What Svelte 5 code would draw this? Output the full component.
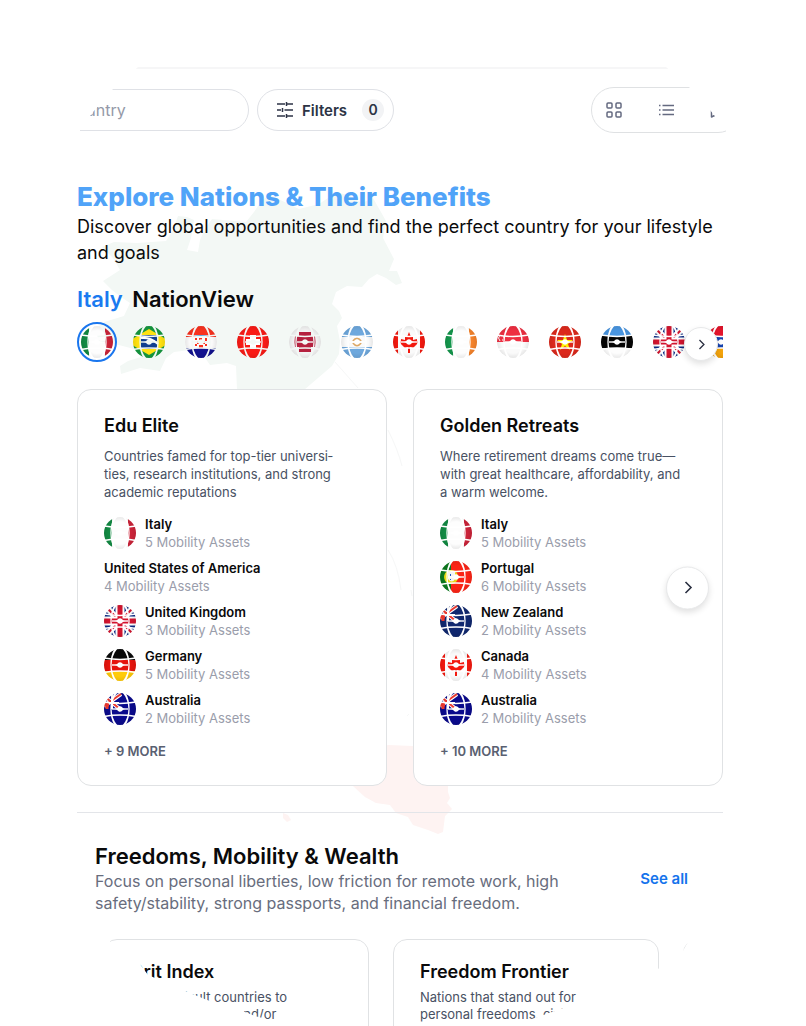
<script>
	let query = "";
	let selected = "Italy";
	let view = "grid";

	const jack = [
		{ d: "M0 0H32V32H0Z", fill: "#0b2a83" },
		{ d: "M0 0L32 32M32 0L0 32", stroke: "#fff", width: 6 },
		{ d: "M0 0L32 32M32 0L0 32", stroke: "#d3142f", width: 2 },
		{ d: "M16 0V32M0 16H32", stroke: "#fff", width: 9 },
		{ d: "M16 0V32M0 16H32", stroke: "#d3142f", width: 5 },
	];

	const southern = (blue) => [
		{ d: "M0 0H32V32H0Z", fill: blue },
		{ d: "M0 3L17 17M17 1L0 13", stroke: "#fff", width: 4 },
		{ d: "M0 3L17 17M17 1L0 13", stroke: "#f0392f", width: 2 },
		{ d: "M0 10H15M8 0V16", stroke: "#fff", width: 2 },
		{ d: "M0 12H5M3 9V16", stroke: "#f0392f", width: 3 },
	];

	const flags = {
		Italy: [
			{ d: "M0 0H8V32H0Z", fill: "#128a43" },
			{ d: "M8 0H24V32H8Z", fill: "#fdfdfd" },
			{ d: "M24 0H32V32H24Z", fill: "#cb2339" },
		],
		Brazil: [
			{ d: "M0 0H32V32H0Z", fill: "#15983f" },
			{ d: "M16 3L38 16L16 29L-6 16Z", fill: "#ffe111" },
			{ d: "M8 9H24V23H8Z", fill: "#123f8f" },
			{ d: "M8 12Q17 11 25 18", stroke: "#fff", width: 2 },
		],
		Croatia: [
			{ d: "M0 0H32V11H0Z", fill: "#f8321f" },
			{ d: "M0 11H32V22H0Z", fill: "#fafafa" },
			{ d: "M0 22H32V32H0Z", fill: "#12128f" },
			{ d: "M10 9H22V11H10Z", fill: "#2b8fd8" },
			{
				d: "M10 12h2v2h-2zM14 12h3v3h-3zM20 12h2v3h-2zM12 15h2v3h-2zM18 15h2v3h-2zM10 18h2v2h-2zM20 18h2v2h-2zM14 19h4v3h-4z",
				fill: "#f8321f",
			},
		],
		Switzerland: [
			{ d: "M0 0H32V32H0Z", fill: "#f91b16" },
			{ d: "M13 9H19V13H23V19H19V23H13V19H9V13H13Z", fill: "#fff" },
		],
		Latvia: [
			{ d: "M0 0H32V32H0Z", fill: "#f3f3f3" },
			{ d: "M6 10Q5 16 6 21H26Q27 16 26 10Z", fill: "#b5213f" },
			{ d: "M10 6H22V26H10Z", fill: "#b5213f" },
		],
		Argentina: [
			{ d: "M0 0H32V11H0Z", fill: "#6ea8dd" },
			{ d: "M0 11H32V21H0Z", fill: "#fafafa" },
			{ d: "M0 21H32V32H0Z", fill: "#6ea8dd" },
			{ d: "M12 15Q16 10 20 15M12 17Q16 22 20 17", stroke: "#dda968", width: 2 },
		],
		Canada: [
			{ d: "M0 0H5V32H0Z", fill: "#f3190f" },
			{ d: "M5 0H27V32H5Z", fill: "#fafafa" },
			{ d: "M27 0H32V32H27Z", fill: "#f3190f" },
			{
				d: "M16 6L18 11L20 10L20 14L24 13L25 17L20 22L17 21V27H15V21L12 22L7 17L8 13L12 14L12 10L14 11Z",
				fill: "#f3190f",
			},
		],
		Ireland: [
			{ d: "M0 0H8V32H0Z", fill: "#14964c" },
			{ d: "M8 0H24V32H8Z", fill: "#fdfdfd" },
			{ d: "M24 0H32V32H24Z", fill: "#f5832b" },
		],
		Singapore: [
			{ d: "M0 0H32V16H0Z", fill: "#ee2f42" },
			{ d: "M0 16H32V32H0Z", fill: "#fafafa" },
			{ d: "M3 9Q0 12 3 15M6 11h1M5 14h1", stroke: "#fff", width: 1 },
		],
		Vietnam: [
			{ d: "M0 0H32V32H0Z", fill: "#dc291c" },
			{
				d: "M16 8L18 14H24L19 18L21 24L16 20L11 24L13 18L8 14H14Z",
				fill: "#fff100",
			},
		],
		Estonia: [
			{ d: "M0 0H32V10H0Z", fill: "#4995e0" },
			{ d: "M0 10H32V22H0Z", fill: "#050505" },
			{ d: "M0 22H32V32H0Z", fill: "#fdfdfd" },
		],
		"United Kingdom": jack,
		Armenia: [
			{ d: "M0 0H32V11H0Z", fill: "#e3142b" },
			{ d: "M0 11H32V22H0Z", fill: "#1743ae" },
			{ d: "M0 22H32V32H0Z", fill: "#f6a50c" },
		],
		Germany: [
			{ d: "M0 0H32V11H0Z", fill: "#080808" },
			{ d: "M0 11H32V22H0Z", fill: "#e5140d" },
			{ d: "M0 22H32V32H0Z", fill: "#ffcb0a" },
		],
		Australia: southern("#0a0a8c"),
		"New Zealand": southern("#10286f"),
		Portugal: [
			{ d: "M0 0H11V32H0Z", fill: "#0c7a1e" },
			{ d: "M11 0H32V32H11Z", fill: "#fb2517" },
			{ d: "M11 9a7 7 0 1 0 .1 0", fill: "#e8d914" },
			{ d: "M8 11H15V18Q12 23 8 18Z", fill: "#f4f4f4" },
			{ d: "M10 13h1v2h-1zM13 15h1v2h-1zM10 18h1v1h-1z", fill: "#1d5bc4" },
		],
	};

	const nations = [
		"Italy",
		"Brazil",
		"Croatia",
		"Switzerland",
		"Latvia",
		"Argentina",
		"Canada",
		"Ireland",
		"Singapore",
		"Vietnam",
		"Estonia",
		"United Kingdom",
		"Armenia",
	];

	const collections = [
		{
			title: "Edu Elite",
			text: "Countries famed for top-tier universi\u00adties, research institutions, and strong academic reputations",
			more: 9,
			countries: [
				{ name: "Italy", assets: 5 },
				{ name: "United States of America", assets: 4 },
				{ name: "United Kingdom", assets: 3 },
				{ name: "Germany", assets: 5 },
				{ name: "Australia", assets: 2 },
			],
		},
		{
			title: "Golden Retreats",
			text: "Where retirement dreams come true—with great healthcare, affordability, and a warm welcome.",
			more: 10,
			countries: [
				{ name: "Italy", assets: 5 },
				{ name: "Portugal", assets: 6 },
				{ name: "New Zealand", assets: 2 },
				{ name: "Canada", assets: 4 },
				{ name: "Australia", assets: 2 },
			],
		},
	];

	const freedoms = [
		{ title: "Grit Index", text: "Most difficult countries to obtain residence and/or" },
		{ title: "Freedom Frontier", text: "Nations that stand out for personal freedoms, civil" },
		{ title: "", text: "" },
	];
</script>

{#snippet globe(name)}
	<svg class="globe" viewBox="0 0 32 32" aria-hidden="true">
		<g mask="url(#globe-mask)">
			{#each flags[name] as part}
				<path
					d={part.d}
					fill={part.fill || "none"}
					stroke={part.stroke || "none"}
					stroke-width={part.width || 0}
				/>
			{/each}
			<circle cx="16" cy="16" r="16" fill="url(#globe-shade)" />
		</g>
	</svg>
{/snippet}

{#snippet chevron()}
	<svg class="chevron" viewBox="0 0 16 16" aria-hidden="true">
		<path d="M5.5 2.5L11 8L5.5 13.5" />
	</svg>
{/snippet}

<svg class="defs" width="0" height="0" aria-hidden="true">
	<defs>
		<mask id="globe-mask" maskUnits="userSpaceOnUse" x="0" y="0" width="32" height="32">
			<circle cx="16" cy="16" r="16" fill="#fff" />
			<path
				d="M11 -1C4.8 8 4.8 24 11 33H14C5.5 24 5.5 8 14 -1ZM21 -1C27.2 8 27.2 24 21 33H18C26.5 24 26.5 8 18 -1Z"
				fill="#000"
			/>
			<g fill="none" stroke="#000" stroke-width="1.4">
				<path d="M0 9Q16 12 32 9M0 23.5Q16 20.500 32 23.500" />
				<path d="M8 16H24" />
			</g>
			<path
				d="M11 16Q13.5 15.5 14 14Q16 12.5 18 14Q18.5 15.5 21 16Q18.5 16.5 18 18Q16 19.5 14 18Q13.5 16.5 11 16Z"
				fill="#000"
			/>
		</mask>
		<radialGradient id="globe-shade">
			<stop offset="0.7" stop-color="#000" stop-opacity="0" />
			<stop offset="1" stop-color="#000" stop-opacity="0.08" />
		</radialGradient>
	</defs>
</svg>

<div class="page">
	<svg class="map" width="806" height="1026" viewBox="0 0 806 1026" aria-hidden="true">
		<path
			class="north"
			d="M237 390L236 366L227 363L210 365L203 355L190 350L174 352L166 358L160 371L140 368L121 374L120 366L128 361L141 357L134 349L119 345L99 341L95 329L104 322L124 316L130 303L121 297L112 290L103 281L120 270L113 258L102 247L114 242L137 243L166 241L173 230L178 216L187 217L194 220L191 238L187 250L198 252L200 240L205 229L212 219L246 222L254 212L262 200L270 195L299 209L319 204L337 192L350 196L362 203L373 198L386 221L383 238L394 259L389 271L397 271L402 283L396 285L386 278L377 274L369 279L362 287L347 286L336 292L332 304L339 311L342 318L337 326L340 341L339 354L332 366L318 378L304 390Z"
		/>
		<path
			class="south"
			d="M330 762L388 745L413 746L448 770L448 792L450 798L447 803L452 809L445 816L443 832L438 834L428 830L413 825L408 817L396 813L390 805L376 803L365 797L353 786ZM283 813L288 815L291 820L287 822L283 818Z"
		/>
		<path class="coast" d="M335 362L358 388M388 430Q398 450 402 466M388 550Q398 565 401 590M411 590L412 596M409 714L407 716" />
	</svg>

	<header>
		<div class="toolbar">
			<input type="search" aria-label="Country" placeholder="Country" bind:value={query} />
			<button class="filters">
				<svg viewBox="0 0 16 16" aria-hidden="true">
					<path d="M0 2H8M9.5 0V4M9.5 2H16M0 8H4M5.5 6V10M7.5 8H16M0 14H8M9.5 14H16M9.5 12V16" />
				</svg>
				Filters
				<span class="count">0</span>
			</button>
			<div class="views">
				<button aria-label="Grid view" aria-pressed={view === "grid"} on:click={() => (view = "grid")}>
					<svg viewBox="0 0 16 16" aria-hidden="true">
						<rect x="1" y="1" width="5" height="5" rx="1" />
						<rect x="10" y="1" width="5" height="5" rx="1" />
						<rect x="1" y="10" width="5" height="5" rx="1" />
						<rect x="10" y="10" width="5" height="5" rx="1" />
					</svg>
				</button>
				<button aria-label="List view" aria-pressed={view === "list"} on:click={() => (view = "list")}>
					<svg viewBox="0 0 16 16" aria-hidden="true">
						<path d="M4.5 3.5H16M4.5 8H16M4.5 12.5H16M1 3.5H2.5M1 8H2.5M1 12.5H2.5" />
					</svg>
				</button>
				<button aria-label="Map view" aria-pressed={view === "map"} on:click={() => (view = "map")}>
					<svg viewBox="0 0 16 16" aria-hidden="true">
						<path d="M1.5 3L5.5 1L10.5 3L14.5 1V13L10.5 15L5.5 13L1.5 15Z" />
					</svg>
				</button>
			</div>
		</div>
	</header>

	<main>
		<h1>Explore Nations &amp; Their Benefits</h1>
		<p class="lead">
			Discover global opportunities and find the perfect country for your lifestyle and goals
		</p>

		<h2><span>{selected}</span> NationView</h2>
		<div class="slider nations">
			<div class="strip">
				{#each nations as name}
					<button
						class="nation"
						class:active={name === selected}
						aria-label={name}
						on:click={() => (selected = name)}
					>
						{@render globe(name)}
					</button>
				{/each}
			</div>
			<button class="next small" aria-label="More nations">{@render chevron()}</button>
		</div>

		<div class="slider">
			<div class="cards">
				{#each collections as card}
					<article class="card">
						<h3>{card.title}</h3>
						<p>{card.text}</p>
						<ul>
							{#each card.countries as country}
								<li>
									{#if flags[country.name]}
										{@render globe(country.name)}
									{/if}
									<div>
										<strong>{country.name}</strong>
										<span>{country.assets} Mobility Assets</span>
									</div>
								</li>
							{/each}
						</ul>
						<button class="more">+ {card.more} MORE</button>
					</article>
				{/each}
			</div>
			<button class="next" aria-label="More collections">{@render chevron()}</button>
		</div>

		<section>
			<div class="section-head">
				<div>
					<h2>Freedoms, Mobility &amp; Wealth</h2>
					<p>
						Focus on personal liberties, low friction for remote work, high safety/stability, strong
						passports, and financial freedom.
					</p>
				</div>
				<a href="#freedoms">See all</a>
			</div>
			<div class="track" id="freedoms">
				{#each freedoms as card}
					<article class="card">
						<h3>{card.title}</h3>
						<p>{card.text}</p>
					</article>
				{/each}
			</div>
		</section>
	</main>
</div>

<style>
	:global(body) {
		background: #fff;
	}

	.page {
		position: relative;
		height: 100vh;
		overflow: hidden;
		color: #0a0a0b;
		font-family: Inter, "Liberation Sans", sans-serif;
	}

	.page * {
		box-sizing: border-box;
	}

	h1,
	h2,
	h3,
	p,
	ul {
		margin: 0;
		padding: 0;
	}

	button {
		padding: 0;
		border: 0;
		background: none;
		color: inherit;
		font: inherit;
		cursor: pointer;
	}

	svg {
		display: block;
		flex: none;
	}

	.defs {
		position: absolute;
	}

	.map {
		position: absolute;
		top: 0;
		left: 0;
	}

	.north {
		fill: #f3f8f5;
	}

	.south {
		fill: #fef3f2;
	}

	.coast {
		fill: none;
		stroke: #f6f7f7;
	}

	/* the corners of the header fall off along a curve */
	header {
		position: relative;
		padding: 67px 65px 0 40px;
		clip-path: polygon(
			138px 67px,
			calc(100% - 140px) 67px,
			calc(100% - 117px) 87px,
			calc(100% - 96px) 110px,
			calc(100% - 80px) 130px,
			calc(100% - 80px) 100%,
			80px 100%,
			80px 130px,
			93px 112px,
			100px 104px,
			113px 89px
		);
	}

	.toolbar {
		display: flex;
		align-items: center;
		gap: 8px;
		padding-top: 18px;
		border-top: 2px solid #f6f6f7;
	}

	input {
		width: 209px;
		height: 42px;
		padding: 0 24px;
		border: 1px solid #dfe1e6;
		border-radius: 21px;
		background: #fff;
		font: 16px Inter, "Liberation Sans", sans-serif;
	}

	input::placeholder {
		color: #9499a8;
	}

	.filters {
		display: flex;
		align-items: center;
		gap: 9px;
		height: 42px;
		padding: 0 9px 0 19px;
		border: 1px solid #dfe1e6;
		border-radius: 21px;
		background: #fff;
		color: #2c3345;
		font-size: 15px;
		font-weight: 600;
	}

	.filters svg {
		width: 16px;
		height: 16px;
		fill: none;
		stroke: #2c3345;
		stroke-width: 1.5;
	}

	.count {
		width: 22px;
		margin-left: 6px;
		border-radius: 11px;
		background: #f2f3f5;
		font-size: 14px;
		line-height: 22px;
		text-align: center;
	}

	.views {
		display: flex;
		gap: 20px;
		height: 46px;
		margin-left: auto;
		padding: 0 6px;
		border: 1px solid #dfe1e3;
		border-radius: 23px;
	}

	.views button {
		display: grid;
		place-items: center;
		width: 32px;
	}

	.views svg {
		width: 16px;
		height: 16px;
		fill: none;
		stroke: #646a80;
		stroke-linejoin: round;
		stroke-width: 1.5;
	}

	main {
		position: relative;
		padding: 48px 83px 0 77px;
	}

	h1 {
		color: #50a3f8;
		font-size: 26px;
		font-weight: 800;
		line-height: 32px;
	}

	.lead {
		margin-top: 1px;
		font-size: 18px;
		line-height: 26px;
	}

	h2 {
		font-size: 22px;
		font-weight: 600;
		line-height: 28px;
	}

	.lead + h2 {
		margin-top: 19px;
	}

	h2 span {
		margin-right: 4px;
		color: #1a7af0;
	}

	.slider {
		position: relative;
	}

	.nations {
		margin: 9px 0 27px;
	}

	.strip {
		display: flex;
		gap: 12px;
		overflow: hidden;
	}

	.nation {
		display: grid;
		flex: none;
		place-items: center;
		width: 40px;
		height: 40px;
		border-radius: 50%;
	}

	.nation.active {
		border: 2px solid #1a76ee;
	}

	.globe {
		width: 32px;
		height: 32px;
	}

	.next {
		position: absolute;
		top: 50%;
		right: 14px;
		display: grid;
		place-items: center;
		width: 43px;
		height: 43px;
		border: 1px solid #e8e9ea;
		border-radius: 50%;
		background: #fff;
		box-shadow: 0 3px 6px rgba(0, 0, 0, 0.12);
		transform: translateY(-50%);
	}

	.next.small {
		top: 55%;
		right: 5px;
		width: 34px;
		height: 34px;
	}

	.chevron {
		width: 16px;
		height: 16px;
		fill: none;
		stroke: #2a2f40;
		stroke-width: 1.6;
	}

	.small .chevron {
		width: 13px;
		height: 13px;
	}

	.cards {
		display: grid;
		grid-template-columns: 1fr 1fr;
		gap: 26px;
	}

	.card {
		padding: 24px 26px 25px;
		border: 1px solid #e0e2e4;
		border-radius: 14px;
		background: #fff;
	}

	h3 {
		min-height: 24px;
		font-size: 18px;
		font-weight: 600;
		line-height: 24px;
	}

	.card p {
		margin-top: 9px;
		padding-right: 12px;
		color: #485163;
		font-size: 13px;
		line-height: 18px;
	}

	ul {
		display: grid;
		gap: 8px;
		margin: 14px 0 15px;
		list-style: none;
	}

	li {
		display: flex;
		align-items: center;
		gap: 9px;
		font-size: 13px;
		line-height: 18px;
	}

	li strong,
	li span {
		display: block;
	}

	li strong {
		font-weight: 600;
	}

	li span {
		color: #9a9dab;
	}

	.more {
		display: block;
		color: #596071;
		font-size: 13px;
		font-weight: 600;
		line-height: 18px;
	}

	section {
		margin-top: 26px;
		padding: 29px 35px 0 18px;
		border-top: 1px solid #e3e5e9;
	}

	.section-head {
		display: flex;
		align-items: center;
		justify-content: space-between;
		gap: 48px;
	}

	.section-head p {
		max-width: 480px;
		color: #686d7d;
		font-size: 16px;
		line-height: 22px;
	}

	.section-head a {
		flex: none;
		color: #1473ec;
		font-size: 15px;
		font-weight: 600;
		text-decoration: none;
	}

	/* the row of cards runs out along a curve at both ends */
	.track {
		display: flex;
		gap: 24px;
		margin-top: 25px;
		padding-left: 8px;
		overflow: hidden;
		clip-path: polygon(
			13px 0,
			20px 8px,
			45px 25px,
			53px 36px,
			95px 54px,
			112px 61px,
			145px 71px,
			160px 77px,
			175px 81px,
			190px 87px,
			calc(100% - 183px) 87px,
			calc(100% - 153px) 79px,
			calc(100% - 122px) 68px,
			calc(100% - 28px) 29px,
			calc(100% - 5px) 12px,
			100% 3px,
			100% 0
		);
	}

	.track .card {
		flex: 0 0 266px;
		padding: 20px 26px;
	}

	.track p {
		margin-top: 5px;
		padding-right: 30px;
		line-height: 17px;
	}
</style>
